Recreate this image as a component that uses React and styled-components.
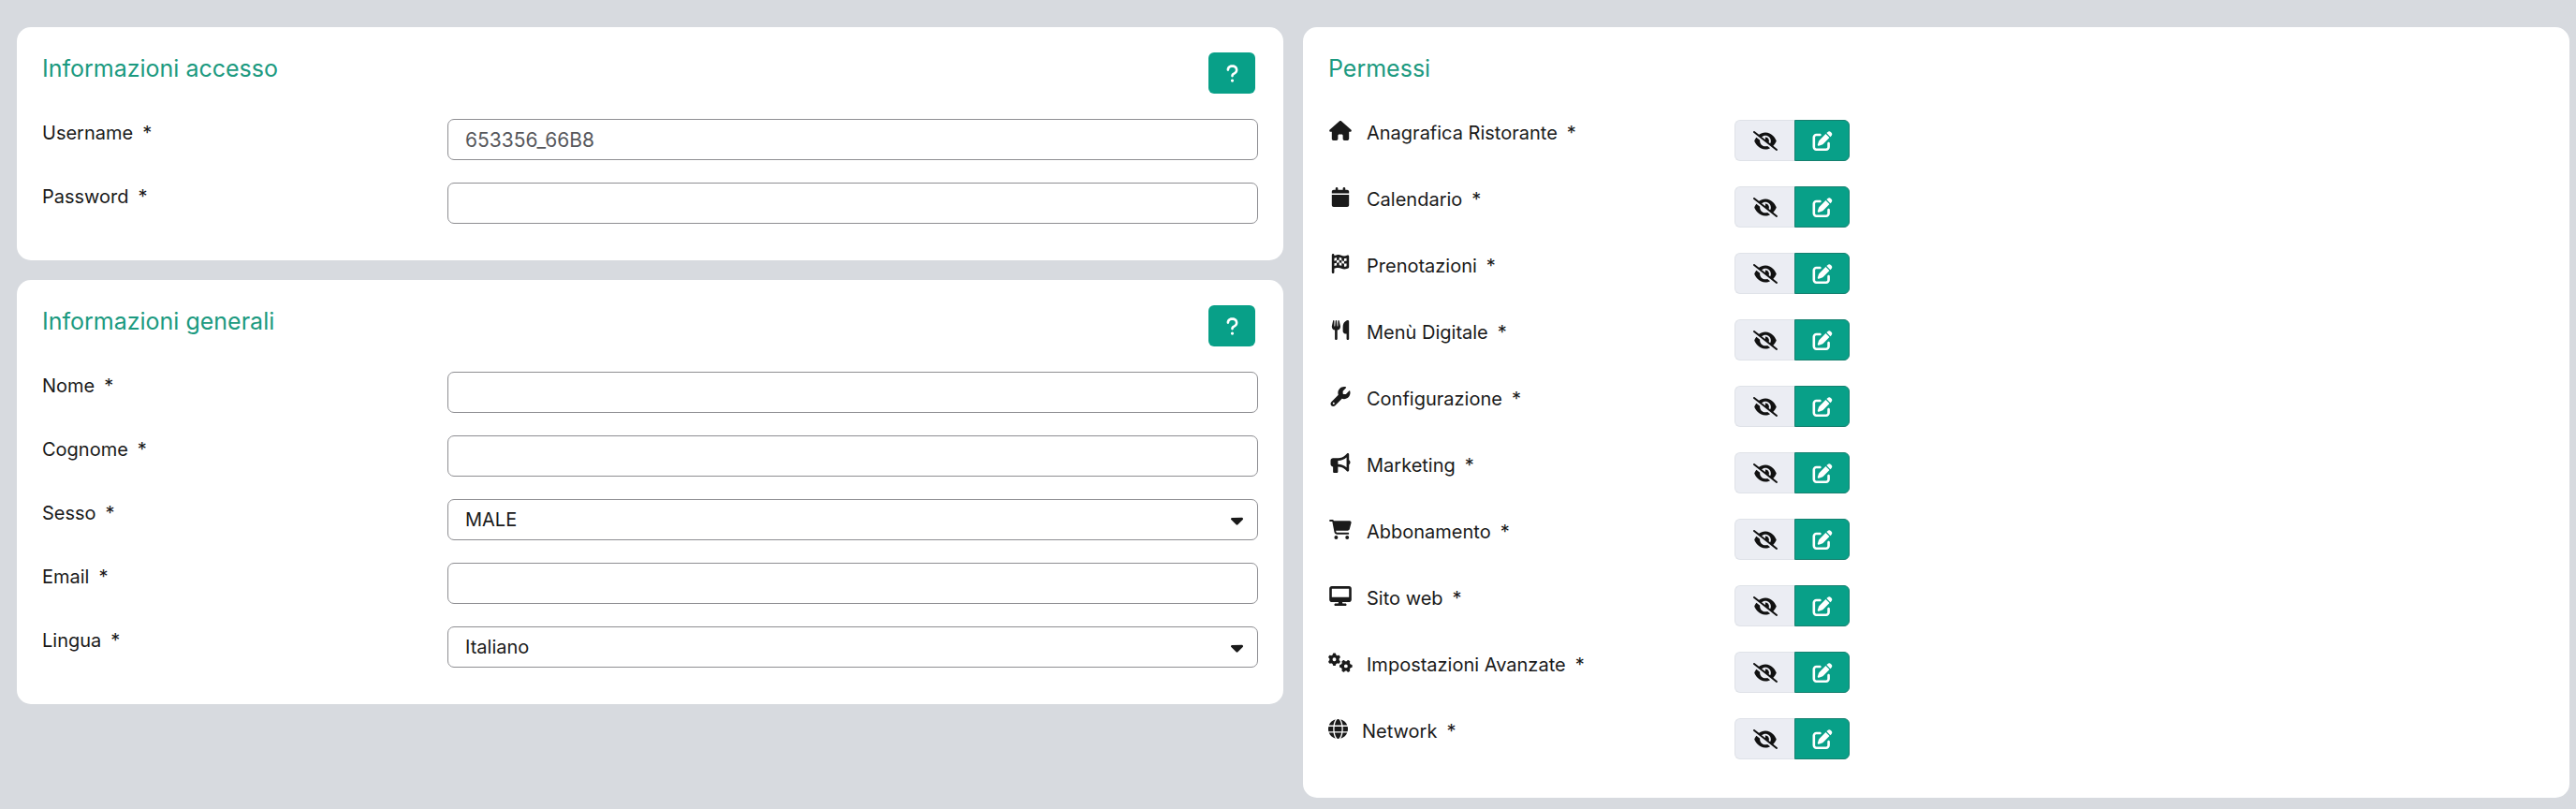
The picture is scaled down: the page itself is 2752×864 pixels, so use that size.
import React from 'react';
import styled, { createGlobalStyle } from 'styled-components';
import {
  FaHouse,
  FaCalendar,
  FaFlagCheckered,
  FaUtensils,
  FaWrench,
  FaBullhorn,
  FaCartShopping,
  FaDesktop,
  FaGears,
  FaGlobe,
  FaEyeSlash,
  FaPenToSquare,
  FaCaretDown,
  FaQuestion,
} from 'react-icons/fa6';

const GlobalStyle = createGlobalStyle`
  * {
    box-sizing: border-box;
  }

  body {
    margin: 0;
    background: #d7dadf;
    color: #1a1a1a;
    font-family: Inter, "Liberation Sans", sans-serif;
    font-size: 20px;
    line-height: 30px;
  }
`;

const Page = styled.main`
  display: grid;
  grid-template-columns: 1fr 1fr;
  align-items: start;
  gap: 21px;
  padding: 29px 7px 12px 18px;
`;

const Column = styled.div`
  display: flex;
  flex-direction: column;
  gap: 21px;
`;

const Card = styled.section`
  padding: 27px 27px 39px;
  background: #fff;
  border-radius: 15px;
`;

const CardHeader = styled.header`
  display: flex;
  justify-content: space-between;
  align-items: flex-start;
  height: 44px;
  margin-bottom: 27px;
  padding-right: 3px;
`;

const CardTitle = styled.h2`
  margin: 0;
  color: #1c9a80;
  font-size: 25px;
  font-weight: 400;
  line-height: 34px;
`;

const HelpButton = styled.button`
  display: flex;
  align-items: center;
  justify-content: center;
  width: 50px;
  height: 44px;
  padding: 0;
  border: 0;
  border-radius: 6px;
  background: #08a088;
  color: #fff;
  font-size: 21px;
  cursor: pointer;
`;

const Rows = styled.div`
  display: grid;
  gap: 24px;
`;

const Row = styled.div`
  display: grid;
  grid-template-columns: 1fr 2fr;
  align-items: start;
`;

const Label = styled.label`
  display: flex;
  align-items: center;
  gap: 10px;
`;

const Control = styled.div`
  position: relative;
`;

const Input = styled.input`
  display: block;
  width: 100%;
  height: 44px;
  padding: 0 18px;
  border: 1px solid #8e8e92;
  border-radius: 7px;
  background: #fff;
  color: #57585c;
  font: inherit;
  font-size: 21px;
`;

const Select = styled.select`
  display: block;
  width: 100%;
  height: 44px;
  padding: 0 48px 0 18px;
  border: 1px solid #8e8e92;
  border-radius: 7px;
  background: #fff;
  color: #1a1a1a;
  font: inherit;
  appearance: none;
`;

const Caret = styled(FaCaretDown)`
  position: absolute;
  top: 12px;
  right: 12px;
  font-size: 21px;
  pointer-events: none;
`;

const PermissionName = styled.div`
  display: flex;
  align-items: flex-start;
  gap: 15px;
`;

const IconBox = styled.span`
  width: ${({ $narrow }) => ($narrow ? '21px' : '26px')};
  padding-top: 2px;

  svg {
    display: block;
    width: 100%;
    height: 21px;
  }
`;

const Toggle = styled.div`
  display: flex;
  padding: 1px 0 2px 1px;
`;

const ToggleButton = styled.button`
  display: flex;
  align-items: center;
  justify-content: center;
  width: ${({ $active }) => ($active ? '59px' : '64px')};
  height: 44px;
  padding: 0;
  border: 1px solid ${({ $active }) => ($active ? '#15806f' : '#dfe2e8')};
  border-width: ${({ $active }) => ($active ? '1px' : '1px 0 1px 1px')};
  border-radius: ${({ $active }) => ($active ? '0 6px 6px 0' : '6px 0 0 6px')};
  background: ${({ $active }) => ($active ? '#08a088' : '#ebedf3')};
  color: ${({ $active }) => ($active ? '#fff' : '#111')};
  cursor: pointer;

  svg {
    width: 26px;
    height: 21px;
  }
`;

const permissions = [
  { name: 'Anagrafica Ristorante', icon: FaHouse },
  { name: 'Calendario', icon: FaCalendar },
  { name: 'Prenotazioni', icon: FaFlagCheckered },
  { name: 'Menù Digitale', icon: FaUtensils },
  { name: 'Configurazione', icon: FaWrench },
  { name: 'Marketing', icon: FaBullhorn },
  { name: 'Abbonamento', icon: FaCartShopping },
  { name: 'Sito web', icon: FaDesktop },
  { name: 'Impostazioni Avanzate', icon: FaGears },
  { name: 'Network', icon: FaGlobe, narrow: true },
];

const Field = ({ id, label, type = 'text', value, options }) => (
  <Row>
    <Label htmlFor={id}>
      {label} <span>*</span>
    </Label>
    <Control>
      {options ? (
        <>
          <Select id={id} defaultValue={value}>
            {options.map((option) => (
              <option key={option}>{option}</option>
            ))}
          </Select>
          <Caret />
        </>
      ) : (
        <Input id={id} type={type} defaultValue={value} />
      )}
    </Control>
  </Row>
);

const FormCard = ({ title, children }) => (
  <Card>
    <CardHeader>
      <CardTitle>{title}</CardTitle>
      <HelpButton type="button" aria-label="Aiuto">
        <FaQuestion />
      </HelpButton>
    </CardHeader>
    <Rows>{children}</Rows>
  </Card>
);

const Permission = ({ name, icon: Icon, narrow }) => (
  <Row>
    <PermissionName>
      <IconBox $narrow={narrow}>
        <Icon />
      </IconBox>
      <Label as="span">
        {name} <span>*</span>
      </Label>
    </PermissionName>
    <Toggle role="group" aria-label={name}>
      <ToggleButton type="button" aria-label="Nascosto" aria-pressed="false">
        <FaEyeSlash />
      </ToggleButton>
      <ToggleButton type="button" aria-label="Modifica" aria-pressed="true" $active>
        <FaPenToSquare />
      </ToggleButton>
    </Toggle>
  </Row>
);

const App = () => (
  <>
    <GlobalStyle />
    <Page>
      <Column>
        <FormCard title="Informazioni accesso">
          <Field id="username" label="Username" value="653356_66B8" />
          <Field id="password" label="Password" type="password" />
        </FormCard>
        <FormCard title="Informazioni generali">
          <Field id="nome" label="Nome" />
          <Field id="cognome" label="Cognome" />
          <Field id="sesso" label="Sesso" value="MALE" options={['MALE', 'FEMALE']} />
          <Field id="email" label="Email" type="email" />
          <Field id="lingua" label="Lingua" value="Italiano" options={['Italiano', 'English']} />
        </FormCard>
      </Column>
      <Card>
        <CardHeader>
          <CardTitle>Permessi</CardTitle>
        </CardHeader>
        <Rows>
          {permissions.map((permission) => (
            <Permission key={permission.name} {...permission} />
          ))}
        </Rows>
      </Card>
    </Page>
  </>
);

export default App;
